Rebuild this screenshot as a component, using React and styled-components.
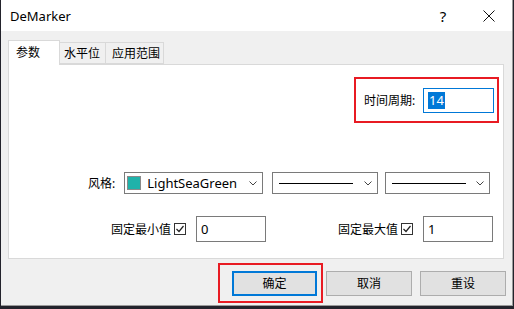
import React from "react";
import styled, { createGlobalStyle } from "styled-components";

const GlobalStyle = createGlobalStyle`
  html, body {
    margin: 0;
    padding: 0;
    background: #23232c;
  }
  body {
    font-family: "Noto Sans", "Noto Sans CJK SC", sans-serif;
    font-size: 12px;
    color: #000;
  }
`;

const Screen = styled.div`
  width: 514px;
  height: 309px;
  padding-left: 1px;
  box-sizing: border-box;
  overflow: hidden;
`;

const Dialog = styled.div`
  width: 512px;
  height: 306px;
  box-sizing: border-box;
  border-right: 1px solid #9a9a9a;
  border-bottom: 1px solid #9a9a9a;
  background: #f0f0f0;
  display: flex;
  flex-direction: column;
`;

const TitleBar = styled.div`
  height: 31px;
  flex: none;
  background: #fff;
  display: flex;
  align-items: center;
  padding-left: 9px;
`;

const Title = styled.div`
  flex: 1;
  font-size: 13px;
`;

const HelpButton = styled.div`
  width: 46px;
  text-align: center;
  font-size: 15px;
`;

const CloseButton = styled.div`
  width: 46px;
  height: 31px;
  display: flex;
  align-items: center;
  justify-content: center;
`;

const Body = styled.div`
  flex: 1;
  display: flex;
  flex-direction: column;
  padding: 9px 8px 0 7px;
`;

const TabStrip = styled.div`
  display: flex;
  align-items: flex-end;
  height: 24px;
`;

const Tab = styled.div`
  position: relative;
  box-sizing: border-box;
  height: ${(p) => (p.$active ? "25px" : "22px")};
  margin-bottom: ${(p) => (p.$active ? "-1px" : "0")};
  margin-left: ${(p) => (p.$first ? "0" : "-1px")};
  padding: ${(p) => (p.$active ? "2px" : "1px")} 0 0 ${(p) => p.$pl}px;
  width: ${(p) => p.$w}px;
  background: ${(p) => (p.$active ? "#fff" : "#f0f0f0")};
  border: 1px solid #d9d9d9;
  border-bottom: ${(p) => (p.$active ? "none" : "1px solid #d9d9d9")};
  z-index: ${(p) => (p.$active ? 2 : 1)};
  line-height: 19px;
`;

const Panel = styled.div`
  position: relative;
  z-index: 1;
  height: 195px;
  box-sizing: border-box;
  background: #fff;
  border: 1px solid #d9d9d9;
  padding: 12px 4px 0 0;
  display: flex;
  flex-direction: column;
`;

const PeriodRow = styled.div`
  display: flex;
  justify-content: flex-end;
`;

const Highlight = styled.div`
  border: 2px solid #e81b23;
  display: flex;
  align-items: center;
  box-sizing: border-box;
  height: ${(p) => p.$h}px;
  padding: ${(p) => p.$pad};
`;

const Label = styled.div`
  white-space: nowrap;
  min-width: ${(p) => p.$w || 0}px;
  margin-right: ${(p) => p.$gap || 0}px;
`;

const TextBox = styled.div`
  box-sizing: border-box;
  width: ${(p) => p.$w}px;
  height: ${(p) => p.$h}px;
  border: 1px solid ${(p) => (p.$focus ? "#0078d7" : "#7a7a7a")};
  background: #fff;
  display: flex;
  align-items: center;
  padding-left: 4px;
  font-size: 13px;
`;

const Selected = styled.span`
  background: #0078d7;
  color: #fff;
  padding: 0 1px;
  line-height: 17px;
`;

const StyleRow = styled.div`
  display: flex;
  align-items: center;
  margin-top: 49px;
  padding-left: 79px;
`;

const Combo = styled.div`
  box-sizing: border-box;
  width: ${(p) => p.$w}px;
  height: 22px;
  margin-right: ${(p) => p.$gap || 0}px;
  border: 1px solid #7a7a7a;
  background: #fff;
  display: flex;
  align-items: center;
  padding: 0 5px 0 2px;
`;

const ComboValue = styled.div`
  flex: 1;
  display: flex;
  align-items: center;
  font-size: 13px;
`;

const Swatch = styled.div`
  width: 14px;
  height: 14px;
  box-sizing: border-box;
  border: 1px solid #8a8a8a;
  background: ${(p) => p.$color};
  margin-right: 6px;
`;

const LineSample = styled.div`
  height: 1px;
  background: #000;
  width: 74px;
  margin-left: 4px;
`;

const FixedRow = styled.div`
  display: flex;
  margin-top: 22px;
  padding-left: 79px;
`;

const FixedGroup = styled.div`
  width: ${(p) => p.$w}px;
  margin-right: ${(p) => p.$gap || 0}px;
  display: flex;
  justify-content: flex-end;
  align-items: center;
`;

const Check = styled.div`
  width: 12px;
  height: 12px;
  box-sizing: border-box;
  border: 1px solid #333;
  background: #fff;
  margin: 0 10px 0 3px;
  display: flex;
  align-items: center;
  justify-content: center;
`;

const ButtonRow = styled.div`
  display: flex;
  justify-content: flex-end;
  align-items: center;
  margin-top: 4px;
  margin-right: -2px;
`;

const Button = styled.div`
  box-sizing: border-box;
  width: ${(p) => p.$w}px;
  height: 25px;
  margin-left: ${(p) => p.$gap || 0}px;
  background: #e1e1e1;
  border: ${(p) => (p.$focus ? "2px solid #0078d7" : "1px solid #adadad")};
  display: flex;
  align-items: center;
  justify-content: center;
`;

const Chevron = () => (
  <svg width="8" height="5" viewBox="0 0 8 5">
    <polyline points="0.5,0.5 4,4 7.5,0.5" fill="none" stroke="#444" strokeWidth="1" />
  </svg>
);

const CheckMark = () => (
  <svg width="10" height="10" viewBox="0 0 10 10">
    <polyline points="1.5,5 4,7.5 8.5,2" fill="none" stroke="#222" strokeWidth="1.2" />
  </svg>
);

const App = () => (
  <Screen>
    <GlobalStyle />
    <Dialog>
      <TitleBar>
        <Title>DeMarker</Title>
        <HelpButton>?</HelpButton>
        <CloseButton>
          <svg width="12" height="12" viewBox="0 0 12 12">
            <path d="M0.5 0.5 L11.5 11.5 M11.5 0.5 L0.5 11.5" stroke="#111" strokeWidth="1" />
          </svg>
        </CloseButton>
      </TitleBar>
      <Body>
        <TabStrip>
          <Tab $active $first $w={52} $pl={7}>参数</Tab>
          <Tab $w={47} $pl={4}>水平位</Tab>
          <Tab $w={59} $pl={6}>应用范围</Tab>
        </TabStrip>
        <Panel>
          <PeriodRow>
            <Highlight $h={46} $pad="0 3px 0 8px">
              <Label $w={53} $gap={6}>时间周期:</Label>
              <TextBox $focus $w={71} $h={25}>
                <Selected>14</Selected>
              </TextBox>
            </Highlight>
          </PeriodRow>
          <StyleRow>
            <Label $gap={9}>风格:</Label>
            <Combo $w={139} $gap={9}>
              <ComboValue>
                <Swatch $color="#20b2aa" />
                LightSeaGreen
              </ComboValue>
              <Chevron />
            </Combo>
            <Combo $w={106} $gap={7}>
              <ComboValue>
                <LineSample />
              </ComboValue>
              <Chevron />
            </Combo>
            <Combo $w={105}>
              <ComboValue>
                <LineSample />
              </ComboValue>
              <Chevron />
            </Combo>
          </StyleRow>
          <FixedRow>
            <FixedGroup $w={178} $gap={9}>
              <Label>固定最小值</Label>
              <Check>
                <CheckMark />
              </Check>
              <TextBox $w={70} $h={26}>0</TextBox>
            </FixedGroup>
            <FixedGroup $w={218}>
              <Label>固定最大值</Label>
              <Check>
                <CheckMark />
              </Check>
              <TextBox $w={70} $h={26}>1</TextBox>
            </FixedGroup>
          </FixedRow>
        </Panel>
        <ButtonRow>
          <Highlight $h={40} $pad="0 4px 0 12px">
            <Button $focus $w={85}>确定</Button>
          </Highlight>
          <Button $w={86} $gap={3}>取消</Button>
          <Button $w={86} $gap={8}>重设</Button>
        </ButtonRow>
      </Body>
    </Dialog>
  </Screen>
);

export default App;
